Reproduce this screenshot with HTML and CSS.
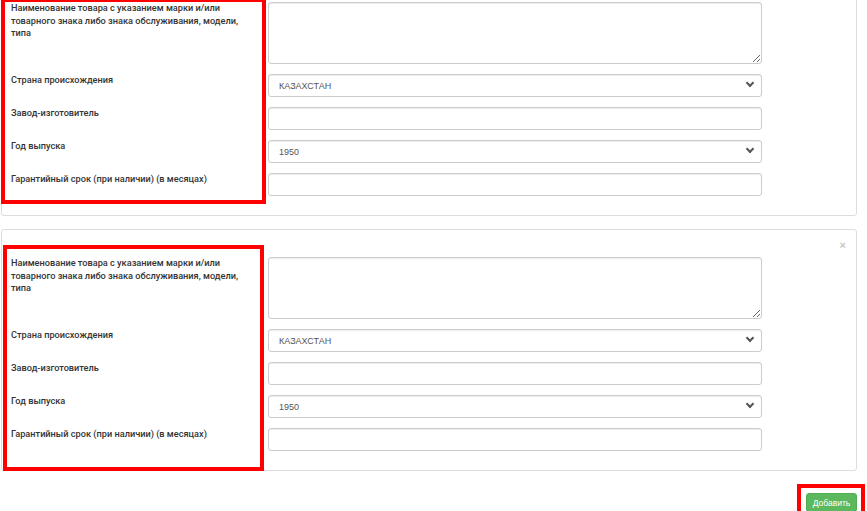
FILE: index.html
```html
<!DOCTYPE html>
<html lang="ru">
<head>
  <meta charset="UTF-8" />
  <meta name="viewport" content="width=device-width, initial-scale=1.0"/>
  <title>Товары</title>
  <link rel="stylesheet" href="styles.css">
</head>
<body>
  <div class="page">
    <div class="panel">
      <div class="mark mark-first"></div>
      <div class="form-grid">
        <label class="form-label">Наименование товара с указанием марки и/или товарного знака либо знака обслуживания, модели, типа</label>
        <textarea class="control area"></textarea>

        <label class="form-label">Страна происхождения</label>
        <div class="select">
          <select class="control">
            <option>КАЗАХСТАН</option>
          </select>
        </div>

        <label class="form-label">Завод-изготовитель</label>
        <input type="text" class="control" />

        <label class="form-label">Год выпуска</label>
        <div class="select">
          <select class="control">
            <option>1950</option>
          </select>
        </div>

        <label class="form-label">Гарантийный срок (при наличии) (в месяцах)</label>
        <input type="text" class="control" />
      </div>
    </div>

    <div class="panel">
      <div class="mark mark-second"></div>
      <span class="close">&times;</span>
      <div class="form-grid">
        <label class="form-label">Наименование товара с указанием марки и/или товарного знака либо знака обслуживания, модели, типа</label>
        <textarea class="control area"></textarea>

        <label class="form-label">Страна происхождения</label>
        <div class="select">
          <select class="control">
            <option>КАЗАХСТАН</option>
          </select>
        </div>

        <label class="form-label">Завод-изготовитель</label>
        <input type="text" class="control" />

        <label class="form-label">Год выпуска</label>
        <div class="select">
          <select class="control">
            <option>1950</option>
          </select>
        </div>

        <label class="form-label">Гарантийный срок (при наличии) (в месяцах)</label>
        <input type="text" class="control" />
      </div>
    </div>

    <div class="actions">
      <div class="add-mark">
        <button class="btn-add">Добавить</button>
      </div>
    </div>
  </div>
</body>
</html>
```

FILE: styles.css
```css
body {
  margin: 0;
  font-family: "Liberation Sans", Arial, sans-serif;
  color: #333;
  background: #fff;
}

.page {
  margin-top: -26px;
  padding: 0 10px 0 1px;
}

.panel {
  position: relative;
  background: #fff;
  border: 1px solid #ddd;
  border-radius: 3px;
  padding: 27px 95px 19px 9px;
  margin-bottom: 13px;
}

.form-grid {
  display: grid;
  grid-template-columns: 257px 494px;
  row-gap: 10px;
}

.form-label {
  font-family: Roboto, "Liberation Sans", Arial, sans-serif;
  font-size: 9.2px;
  font-weight: 500;
  line-height: 12.6px;
  color: #333;
  padding-right: 12px;
}

.control {
  display: block;
  width: 100%;
  height: 23px;
  box-sizing: border-box;
  border: 1px solid #ccc;
  border-radius: 3px;
  box-shadow: inset 0 1px 1px rgba(0,0,0,0.075);
  background: #fff;
  padding: 0 10px;
  font-family: "Liberation Sans", Arial, sans-serif;
  font-size: 9px;
  color: #555;
  margin: 0;
}

.area {
  height: 62px;
  resize: vertical;
  padding: 4px 10px;
}

.select {
  position: relative;
}

.select select {
  appearance: none;
  -webkit-appearance: none;
}

.select::after {
  content: "";
  position: absolute;
  right: 9px;
  top: 6px;
  width: 4px;
  height: 4px;
  border-right: 2px solid #555;
  border-bottom: 2px solid #555;
  transform: rotate(45deg);
  pointer-events: none;
}

.close {
  position: absolute;
  top: 9px;
  right: 10px;
  font-size: 11px;
  font-weight: bold;
  line-height: 12px;
  color: #c8c8c8;
}

/* red annotation frames */
.mark {
  position: absolute;
  box-sizing: border-box;
  border: 4px solid #f00;
  pointer-events: none;
}

.mark-first {
  top: 23px;
  left: -1px;
  width: 265px;
  height: 206px;
}

.mark-second {
  top: 15px;
  left: 1px;
  width: 261px;
  height: 226px;
}

.actions {
  display: flex;
  justify-content: flex-end;
  margin-top: 1px;
}

.add-mark {
  border: 4px solid #f00;
  padding: 5px 4px 5px 5px;
  margin-right: -8px;
}

.btn-add {
  display: block;
  width: 51px;
  height: 19px;
  padding: 0;
  background: #5cb85c;
  border: 1px solid #4cae4c;
  border-radius: 3px;
  color: #fff;
  font-family: "Liberation Sans", Arial, sans-serif;
  font-size: 8.5px;
  cursor: pointer;
}
```
